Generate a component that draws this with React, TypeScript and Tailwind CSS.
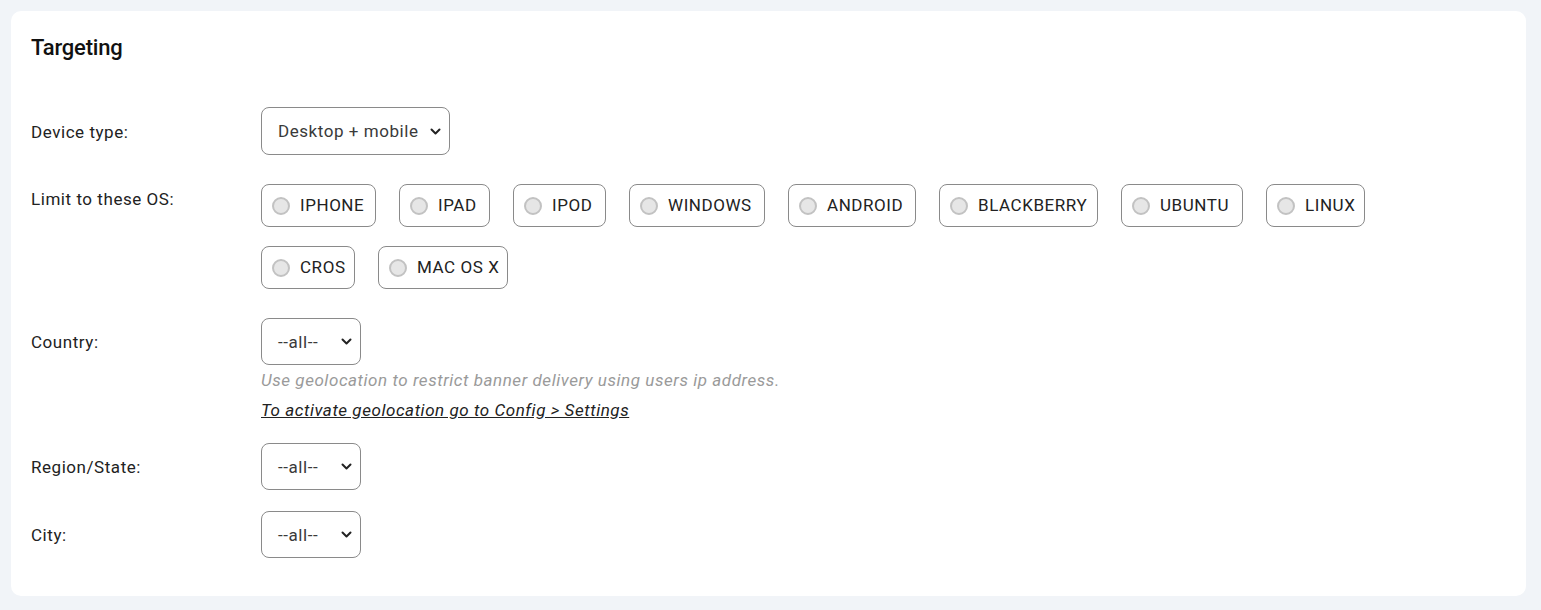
import React from 'react';

const osList: { name: string; w: string }[] = [
  { name: 'IPHONE', w: 'w-[115px]' },
  { name: 'IPAD', w: 'w-[91px]' },
  { name: 'IPOD', w: 'w-[93px]' },
  { name: 'WINDOWS', w: 'w-[136px]' },
  { name: 'ANDROID', w: 'w-[128px]' },
  { name: 'BLACKBERRY', w: 'w-[159px]' },
  { name: 'UBUNTU', w: 'w-[122px]' },
  { name: 'LINUX', w: 'w-[99px]' },
  { name: 'CROS', w: 'w-[94px]' },
  { name: 'MAC OS X', w: 'w-[130px]' },
];

const Chevron = () => (
  <svg width="11" height="7" viewBox="0 0 11 7" fill="none">
    <path d="M1.5 1.5L5.5 5.5L9.5 1.5" stroke="#222" strokeWidth="2" strokeLinecap="round" strokeLinejoin="round" />
  </svg>
);

const FakeSelect = ({ value, width }: { value: string; width: string }) => (
  <div
    className={`${width} h-[47px] flex items-center justify-between pl-4 pr-[8px] border border-[#8a8a8a] rounded-[8px] text-[#3a3a3a] bg-white`}
  >
    <span className="pt-[2px]">{value}</span>
    <Chevron />
  </div>
);

const OsChip = ({ name, w }: { name: string; w: string }) => (
  <label className={`${w} h-[43px] flex items-center gap-[10px] pl-[10px] border border-[#8a8a8a] rounded-[8px] text-[#222] cursor-pointer`}>
    <span className="w-[18px] h-[18px] rounded-full border-2 border-[#c2c2c2] bg-[#e6e6e6] shrink-0" />
    <span>{name}</span>
  </label>
);

export default function App() {
  return (
    <div className="min-h-[610px] bg-[#f1f4f8] p-[11px] pr-[15px] pb-[14px] font-['Roboto',sans-serif] text-[17px] tracking-[0.55px]">
      <div className="bg-white rounded-[10px] pt-[23px] pb-[38px] px-5">
        <h2 className="text-[22px] leading-[28px] font-medium text-[#111] tracking-[-0.2px]">Targeting</h2>

        {/* Device type */}
        <div className="flex items-center mt-[45px]">
          <div className="w-[230px] pt-[3px] text-[#222]">Device type:</div>
          <FakeSelect value="Desktop + mobile" width="w-[189px] h-[48px]" />
        </div>

        {/* OS */}
        <div className="flex items-start mt-[29px]">
          <div className="w-[230px] pt-[3px] leading-[24px] text-[#222]">Limit to these OS:</div>
          <div className="flex-1 flex flex-wrap gap-x-[23px] gap-y-[19px] max-w-[1130px]">
            {osList.map(os => (
              <OsChip key={os.name} name={os.name} w={os.w} />
            ))}
          </div>
        </div>

        {/* Country */}
        <div className="flex items-start mt-[29px]">
          <div className="w-[230px] h-[47px] pt-[3px] flex items-center text-[#222]">Country:</div>
          <div className="flex flex-col">
            <FakeSelect value="--all--" width="w-[100px]" />
            <p className="mt-[3px] leading-[24px] italic text-[#9a9a9a]">
              Use geolocation to restrict banner delivery using users ip address.
            </p>
            <a href="#" className="mt-[6px] leading-[24px] italic underline text-[#222]">
              To activate geolocation go to Config &gt; Settings
            </a>
          </div>
        </div>

        {/* Region */}
        <div className="flex items-center mt-[21px]">
          <div className="w-[230px] pt-[2px] text-[#222]">Region/State:</div>
          <FakeSelect value="--all--" width="w-[100px]" />
        </div>

        {/* City */}
        <div className="flex items-center mt-[21px]">
          <div className="w-[230px] pt-[2px] text-[#222]">City:</div>
          <FakeSelect value="--all--" width="w-[100px]" />
        </div>
      </div>
    </div>
  );
}
